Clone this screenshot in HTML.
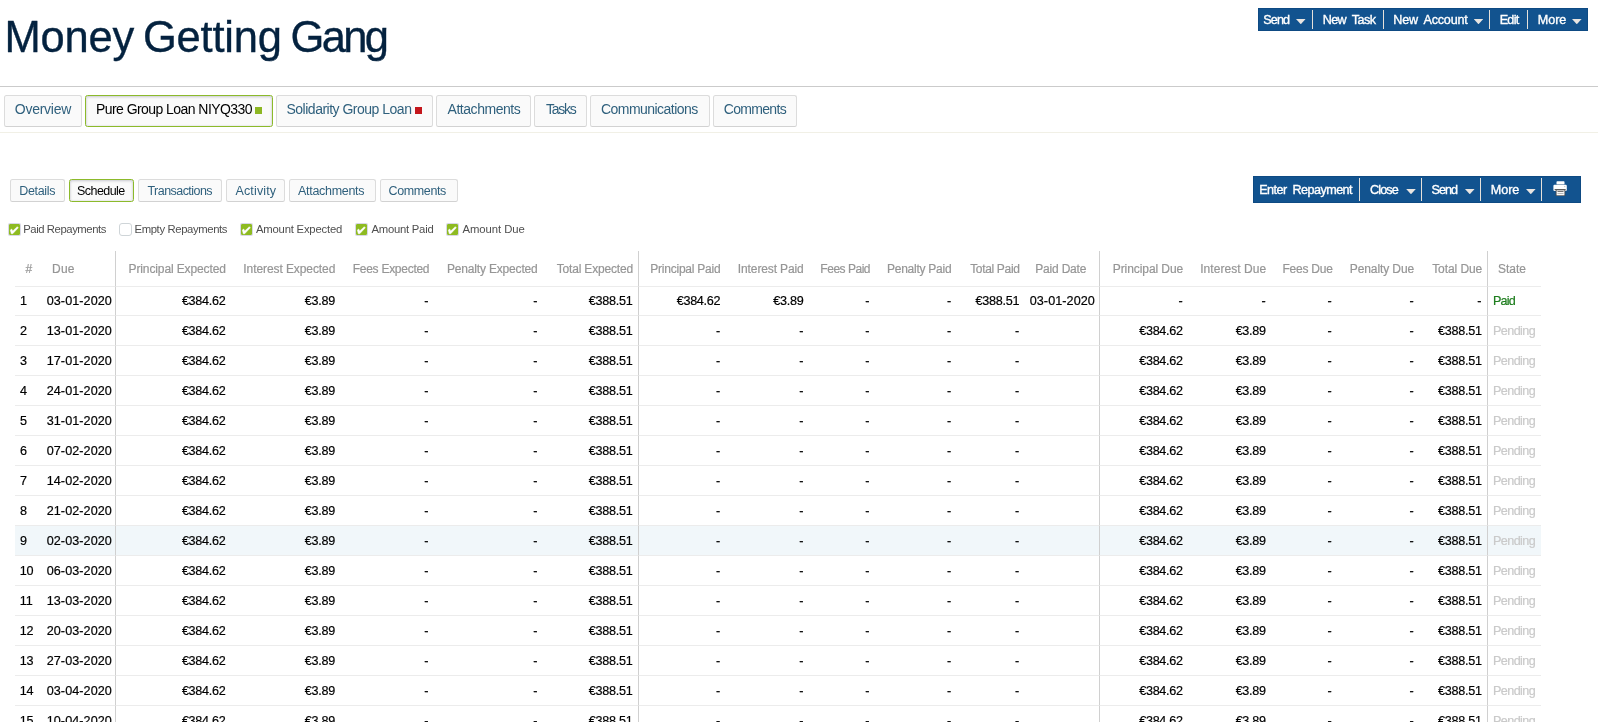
<!DOCTYPE html>
<html lang="en"><head><meta charset="utf-8"><title>Money Getting Gang</title>
<style>
*{box-sizing:border-box}
html,body{margin:0;padding:0;background:#fff}
body{width:1598px;height:722px;overflow:hidden;position:relative;will-change:transform;font-family:"Liberation Sans", sans-serif;color:#000}
a{text-decoration:none;color:inherit}
h1 span{position:absolute;top:0}
h1{position:absolute;margin:0;width:400px;height:60px;font-weight:400;color:#04223f;white-space:nowrap;line-height:60px;-webkit-text-stroke:0.35px #04223f}
hr{position:absolute;left:0;width:1598px;height:1px;border:0;margin:0}
hr.a{top:86px;background:#cbcbcb}
hr.b{top:132px;background:#f1f0e6}
.grp{position:absolute;background:#12538f;border:1px solid #0e4a83;}
.grp a{position:absolute;top:-1px;color:#fff;font-size:12.6px;font-weight:400;white-space:nowrap;word-spacing:3px;display:block;-webkit-text-stroke:0.35px #fff}
.grp i.sep{position:absolute;width:1px;background:#e6e1da}
.grp i.caret{position:absolute;width:9.6px;height:5.3px;background:#e9e5e1;clip-path:polygon(0 0,100% 0,50% 100%)}
.tab{position:absolute;display:block;border:1px solid #dcdcdc;border-bottom-color:#d2d2d2;border-radius:2.5px;background:#fafafa;color:#2f607d;white-space:nowrap;overflow:visible}
.tab.on{border-color:#8cba2b;color:#000;background:#fafafa;box-shadow:inset 0 1px 3px rgba(40,40,70,.2),inset 0 0 2px rgba(40,40,70,.12)}
.tab b{position:absolute;width:7px;height:7px}
.chk{position:absolute;white-space:nowrap;color:#4f4f4f;font-size:11.3px;display:block}
.chk i{position:absolute;left:0;top:0;width:13px;height:13px;border-radius:3px;border:1px solid #cfd5d8;background:#fff}
.chk i.on{background:#8ebb21;border-color:rgba(200,200,218,.7);border-radius:2px;background-clip:padding-box}
.chk i.on svg{position:absolute;left:-1px;top:-1px}
table{position:absolute;left:15px;top:251px;width:1526px;border-collapse:separate;border-spacing:0;table-layout:fixed}
th,td{padding:0;white-space:nowrap;overflow:visible;font-weight:400;border-bottom:1px solid #ececec}
th{color:#969696;-webkit-text-stroke-width:.2px;font-size:12px;height:36px;vertical-align:top;line-height:20px;padding-top:7.74px}
td{-webkit-text-stroke-width:.2px;font-size:12.6px;height:30px;vertical-align:top;color:#000;line-height:20px;padding-top:4.63px}
tr.first td{height:29px;padding-top:3.63px}
th.v,td.v{border-right:1px solid #d0d0d0}
tr.hl td{background:#f1f7fa}
.r{text-align:right}.l{text-align:left}
td.paid{color:#1d7d1d} td.pend{color:#cacaca}
</style></head>
<body>
<h1 style="left:0;top:6.92px;font-size:43.5px"><span style="left:4.40px;letter-spacing:-0.15px">Money</span> <span style="left:143.00px;letter-spacing:-0.22px">Getting</span> <span style="left:290.40px;letter-spacing:-2.6px">Gang</span></h1>
<header>
<div class="grp" id="client-actions" role="toolbar" aria-label="Client actions" style="left:1258px;top:8px;width:330px;height:23px">
<a href="#" style="left:4.35px;line-height:24.86px;letter-spacing:-0.9px">Send<i class="caret" style="left:32.65px;top:11.00px"></i></a>
<a href="#" style="left:63.65px;line-height:24.86px;letter-spacing:-0.57px">New Task</a>
<a href="#" style="left:134.35px;line-height:24.86px;letter-spacing:-0.21px">New Account<i class="caret" style="left:80.35px;top:11.00px"></i></a>
<a href="#" style="left:240.65px;line-height:24.86px;letter-spacing:-0.67px">Edit</a>
<a href="#" style="left:278.75px;line-height:24.86px;letter-spacing:-0.03px">More<i class="caret" style="left:34.25px;top:11.00px"></i></a>
<i class="sep" style="left:53px;top:1px;height:19px"></i>
<i class="sep" style="left:124px;top:1px;height:19px"></i>
<i class="sep" style="left:230px;top:1px;height:19px"></i>
<i class="sep" style="left:268px;top:1px;height:19px"></i>
</div>
</header>
<hr class="a">
<nav id="client-tabs" aria-label="Client sections">
<a href="#" class="tab" style="left:4px;top:95px;width:78px;height:32px;padding-left:9.80px;font-size:14px;line-height:27.29px;letter-spacing:-0.26px">Overview</a>
<a href="#" class="tab on" style="left:85px;top:95px;width:188px;height:32px;padding-left:10.00px;font-size:14px;line-height:27.29px;letter-spacing:-0.56px">Pure Group Loan NIYQ330<b style="background:#8db723;left:169px;top:11px"></b></a>
<a href="#" class="tab" style="left:276px;top:95px;width:157px;height:32px;padding-left:9.50px;font-size:14px;line-height:27.29px;letter-spacing:-0.5px">Solidarity Group Loan<b style="background:#c4161c;left:138px;top:11px"></b></a>
<a href="#" class="tab" style="left:436px;top:95px;width:95px;height:32px;padding-left:10.50px;font-size:14px;line-height:27.29px;letter-spacing:-0.45px">Attachments</a>
<a href="#" class="tab" style="left:534px;top:95px;width:53px;height:32px;padding-left:11.00px;font-size:14px;line-height:27.29px;letter-spacing:-1.25px">Tasks</a>
<a href="#" class="tab" style="left:590px;top:95px;width:120px;height:32px;padding-left:10.00px;font-size:14px;line-height:27.29px;letter-spacing:-0.54px">Communications</a>
<a href="#" class="tab" style="left:713px;top:95px;width:84px;height:32px;padding-left:9.70px;font-size:14px;line-height:27.29px;letter-spacing:-0.67px">Comments</a>
</nav>
<hr class="b">
<section id="loan-account">
<nav id="account-tabs" aria-label="Account sections">
<a href="#" class="tab" style="left:10px;top:179px;width:55px;height:23px;padding-left:8.20px;font-size:12.5px;line-height:22.93px;letter-spacing:-0.32px">Details</a>
<a href="#" class="tab on" style="left:69px;top:179px;width:65px;height:23px;padding-left:7.10px;font-size:12.5px;line-height:22.93px;letter-spacing:-0.57px">Schedule</a>
<a href="#" class="tab" style="left:138px;top:179px;width:84px;height:23px;padding-left:8.50px;font-size:12.5px;line-height:22.93px;letter-spacing:-0.55px">Transactions</a>
<a href="#" class="tab" style="left:226px;top:179px;width:58.5px;height:23px;padding-left:8.50px;font-size:12.5px;line-height:22.93px;letter-spacing:0.14px">Activity</a>
<a href="#" class="tab" style="left:289px;top:179px;width:86.5px;height:23px;padding-left:8.00px;font-size:12.5px;line-height:22.93px;letter-spacing:-0.3px">Attachments</a>
<a href="#" class="tab" style="left:380px;top:179px;width:78px;height:23px;padding-left:7.50px;font-size:12.5px;line-height:22.93px;letter-spacing:-0.37px">Comments</a>
</nav>
<div class="grp" id="account-actions" role="toolbar" aria-label="Account actions" style="left:1253px;top:176px;width:328px;height:27px">
<a href="#" style="left:5.15px;line-height:28.86px;letter-spacing:-0.54px">Enter Repayment</a>
<a href="#" style="left:115.95px;line-height:28.86px;letter-spacing:-0.82px">Close<i class="caret" style="left:36.25px;top:13.00px"></i></a>
<a href="#" style="left:177.55px;line-height:28.86px;letter-spacing:-0.97px">Send<i class="caret" style="left:33.45px;top:13.00px"></i></a>
<a href="#" style="left:236.75px;line-height:28.86px;letter-spacing:-0.03px">More<i class="caret" style="left:35.25px;top:13.00px"></i></a>
<a href="#" title="Print" style="left:299px;top:4px;width:14px;height:15px"><svg width="14" height="15" viewBox="0 0 14 15" style="display:block"><rect x="3.5" y="0.2" width="8" height="3.3" rx="0.7" fill="#fff"/><rect x="3.5" y="3.3" width="8" height="0.5" fill="#5d7691"/><rect x="0.4" y="3.8" width="13.4" height="6.3" rx="1.1" fill="#fefefe"/><rect x="1.6" y="8.2" width="11" height="0.9" fill="#3a3a3a"/><rect x="3.1" y="8.9" width="8.8" height="5.9" fill="#fafafa" stroke="#484848" stroke-width="0.8"/><rect x="4.5" y="10.1" width="6" height="0.9" fill="#666"/><rect x="4.5" y="12.1" width="6" height="0.8" fill="#a8a8a8"/><rect x="11.2" y="5" width="1.1" height="1.1" fill="#c4c4c4"/></svg></a>
<i class="sep" style="left:105px;top:1px;height:23px"></i>
<i class="sep" style="left:167px;top:1px;height:23px"></i>
<i class="sep" style="left:226px;top:1px;height:23px"></i>
<i class="sep" style="left:287px;top:1px;height:23px"></i>
</div>
<form id="schedule-filters">
<label class="chk" style="left:8px;top:223px;padding-left:15.25px;line-height:12.36px;letter-spacing:-0.43px"><i class="on"><svg width="13" height="13" viewBox="0 0 13 13"><path d="M2.3 7.1 L3.7 6 L4.7 8 L9.3 3.7 L10.3 4.8 L4.7 10.8 L3.3 10.8 Z" fill="#fff" stroke="#fff" stroke-width="0.5" stroke-linejoin="round"/></svg></i>Paid Repayments</label>
<label class="chk" style="left:119px;top:223px;padding-left:15.50px;line-height:12.36px;letter-spacing:-0.37px"><i class=""></i>Empty Repayments</label>
<label class="chk" style="left:240px;top:223px;padding-left:16.00px;line-height:12.36px;letter-spacing:-0.21px"><i class="on"><svg width="13" height="13" viewBox="0 0 13 13"><path d="M2.3 7.1 L3.7 6 L4.7 8 L9.3 3.7 L10.3 4.8 L4.7 10.8 L3.3 10.8 Z" fill="#fff" stroke="#fff" stroke-width="0.5" stroke-linejoin="round"/></svg></i>Amount Expected</label>
<label class="chk" style="left:355px;top:223px;padding-left:16.50px;line-height:12.36px;letter-spacing:-0.25px"><i class="on"><svg width="13" height="13" viewBox="0 0 13 13"><path d="M2.3 7.1 L3.7 6 L4.7 8 L9.3 3.7 L10.3 4.8 L4.7 10.8 L3.3 10.8 Z" fill="#fff" stroke="#fff" stroke-width="0.5" stroke-linejoin="round"/></svg></i>Amount Paid</label>
<label class="chk" style="left:446px;top:223px;padding-left:16.50px;line-height:12.36px;letter-spacing:-0.06px"><i class="on"><svg width="13" height="13" viewBox="0 0 13 13"><path d="M2.3 7.1 L3.7 6 L4.7 8 L9.3 3.7 L10.3 4.8 L4.7 10.8 L3.3 10.8 Z" fill="#fff" stroke="#fff" stroke-width="0.5" stroke-linejoin="round"/></svg></i>Amount Due</label>
</form>
<table id="schedule"><colgroup>
<col style="width:27px">
<col style="width:74px">
<col style="width:115px">
<col style="width:109px">
<col style="width:94px">
<col style="width:109px">
<col style="width:96px">
<col style="width:87px">
<col style="width:83px">
<col style="width:66px">
<col style="width:82px">
<col style="width:68px">
<col style="width:75px">
<col style="width:88px">
<col style="width:83px">
<col style="width:66px">
<col style="width:82px">
<col style="width:69px">
<col style="width:53px">
</colgroup><thead><tr>
<th class="l" style="padding-left:10.60px;letter-spacing:0px">#</th>
<th class="l v" style="padding-left:10.10px;letter-spacing:0.2px">Due</th>
<th class="r" style="padding-right:5.23px;letter-spacing:-0.12px">Principal Expected</th>
<th class="r" style="padding-right:4.69px;letter-spacing:-0.08px">Interest Expected</th>
<th class="r" style="padding-right:4.72px;letter-spacing:-0.27px">Fees Expected</th>
<th class="r" style="padding-right:5.36px;letter-spacing:-0.17px">Penalty Expected</th>
<th class="r v" style="padding-right:5.06px;letter-spacing:-0.18px">Total Expected</th>
<th class="r" style="padding-right:5.56px;letter-spacing:-0.23px">Principal Paid</th>
<th class="r" style="padding-right:5.35px;letter-spacing:-0.12px">Interest Paid</th>
<th class="r" style="padding-right:4.95px;letter-spacing:-0.48px">Fees Paid</th>
<th class="r" style="padding-right:5.66px;letter-spacing:-0.25px">Penalty Paid</th>
<th class="r" style="padding-right:5.43px;letter-spacing:-0.33px">Total Paid</th>
<th class="l v" style="padding-left:10.30px;letter-spacing:-0.2px">Paid Date</th>
<th class="r" style="padding-right:4.90px;letter-spacing:-0.08px">Principal Due</th>
<th class="r" style="padding-right:4.77px;letter-spacing:0.06px">Interest Due</th>
<th class="r" style="padding-right:4.41px;letter-spacing:-0.24px">Fees Due</th>
<th class="r" style="padding-right:4.92px;letter-spacing:-0.1px">Penalty Due</th>
<th class="r v" style="padding-right:4.77px;letter-spacing:-0.07px">Total Due</th>
<th class="l" style="padding-left:9.90px;letter-spacing:0.0px">State</th>
</tr></thead><tbody>
<tr class="first">
<td class="l" style="padding-left:5.00px;letter-spacing:0px">1</td>
<td class="l v" style="padding-left:4.70px;letter-spacing:0.08px">03-01-2020</td>
<td class="r" style="padding-right:5.49px;letter-spacing:-0.27px">€384.62</td>
<td class="r" style="padding-right:5.00px;letter-spacing:-0.27px">€3.89</td>
<td class="r" style="padding-right:5.55px;letter-spacing:0px">-</td>
<td class="r" style="padding-right:5.65px;letter-spacing:0px">-</td>
<td class="r v" style="padding-right:5.59px;letter-spacing:-0.27px">€388.51</td>
<td class="r" style="padding-right:5.69px;letter-spacing:-0.27px">€384.62</td>
<td class="r" style="padding-right:5.60px;letter-spacing:-0.27px">€3.89</td>
<td class="r" style="padding-right:5.55px;letter-spacing:0px">-</td>
<td class="r" style="padding-right:5.85px;letter-spacing:0px">-</td>
<td class="r" style="padding-right:5.79px;letter-spacing:-0.27px">€388.51</td>
<td class="l v" style="padding-left:4.70px;letter-spacing:0.08px">03-01-2020</td>
<td class="r" style="padding-right:5.25px;letter-spacing:0px">-</td>
<td class="r" style="padding-right:5.25px;letter-spacing:0px">-</td>
<td class="r" style="padding-right:5.25px;letter-spacing:0px">-</td>
<td class="r" style="padding-right:5.25px;letter-spacing:0px">-</td>
<td class="r v" style="padding-right:5.45px;letter-spacing:0px">-</td>
<td class="l paid" style="padding-left:4.90px;letter-spacing:-0.77px">Paid</td>
</tr>
<tr>
<td class="l" style="padding-left:5.00px;letter-spacing:0px">2</td>
<td class="l v" style="padding-left:4.70px;letter-spacing:0.08px">13-01-2020</td>
<td class="r" style="padding-right:5.49px;letter-spacing:-0.27px">€384.62</td>
<td class="r" style="padding-right:5.00px;letter-spacing:-0.27px">€3.89</td>
<td class="r" style="padding-right:5.55px;letter-spacing:0px">-</td>
<td class="r" style="padding-right:5.65px;letter-spacing:0px">-</td>
<td class="r v" style="padding-right:5.59px;letter-spacing:-0.27px">€388.51</td>
<td class="r" style="padding-right:5.75px;letter-spacing:0px">-</td>
<td class="r" style="padding-right:5.65px;letter-spacing:0px">-</td>
<td class="r" style="padding-right:5.55px;letter-spacing:0px">-</td>
<td class="r" style="padding-right:5.85px;letter-spacing:0px">-</td>
<td class="r" style="padding-right:5.85px;letter-spacing:0px">-</td>
<td class="l v" style="padding-left:4.70px;letter-spacing:0.08px"></td>
<td class="r" style="padding-right:5.19px;letter-spacing:-0.27px">€384.62</td>
<td class="r" style="padding-right:5.20px;letter-spacing:-0.27px">€3.89</td>
<td class="r" style="padding-right:5.25px;letter-spacing:0px">-</td>
<td class="r" style="padding-right:5.25px;letter-spacing:0px">-</td>
<td class="r v" style="padding-right:5.39px;letter-spacing:-0.27px">€388.51</td>
<td class="l pend" style="padding-left:5.00px;letter-spacing:-0.58px">Pending</td>
</tr>
<tr>
<td class="l" style="padding-left:5.00px;letter-spacing:0px">3</td>
<td class="l v" style="padding-left:4.70px;letter-spacing:0.08px">17-01-2020</td>
<td class="r" style="padding-right:5.49px;letter-spacing:-0.27px">€384.62</td>
<td class="r" style="padding-right:5.00px;letter-spacing:-0.27px">€3.89</td>
<td class="r" style="padding-right:5.55px;letter-spacing:0px">-</td>
<td class="r" style="padding-right:5.65px;letter-spacing:0px">-</td>
<td class="r v" style="padding-right:5.59px;letter-spacing:-0.27px">€388.51</td>
<td class="r" style="padding-right:5.75px;letter-spacing:0px">-</td>
<td class="r" style="padding-right:5.65px;letter-spacing:0px">-</td>
<td class="r" style="padding-right:5.55px;letter-spacing:0px">-</td>
<td class="r" style="padding-right:5.85px;letter-spacing:0px">-</td>
<td class="r" style="padding-right:5.85px;letter-spacing:0px">-</td>
<td class="l v" style="padding-left:4.70px;letter-spacing:0.08px"></td>
<td class="r" style="padding-right:5.19px;letter-spacing:-0.27px">€384.62</td>
<td class="r" style="padding-right:5.20px;letter-spacing:-0.27px">€3.89</td>
<td class="r" style="padding-right:5.25px;letter-spacing:0px">-</td>
<td class="r" style="padding-right:5.25px;letter-spacing:0px">-</td>
<td class="r v" style="padding-right:5.39px;letter-spacing:-0.27px">€388.51</td>
<td class="l pend" style="padding-left:5.00px;letter-spacing:-0.58px">Pending</td>
</tr>
<tr>
<td class="l" style="padding-left:5.00px;letter-spacing:0px">4</td>
<td class="l v" style="padding-left:4.70px;letter-spacing:0.08px">24-01-2020</td>
<td class="r" style="padding-right:5.49px;letter-spacing:-0.27px">€384.62</td>
<td class="r" style="padding-right:5.00px;letter-spacing:-0.27px">€3.89</td>
<td class="r" style="padding-right:5.55px;letter-spacing:0px">-</td>
<td class="r" style="padding-right:5.65px;letter-spacing:0px">-</td>
<td class="r v" style="padding-right:5.59px;letter-spacing:-0.27px">€388.51</td>
<td class="r" style="padding-right:5.75px;letter-spacing:0px">-</td>
<td class="r" style="padding-right:5.65px;letter-spacing:0px">-</td>
<td class="r" style="padding-right:5.55px;letter-spacing:0px">-</td>
<td class="r" style="padding-right:5.85px;letter-spacing:0px">-</td>
<td class="r" style="padding-right:5.85px;letter-spacing:0px">-</td>
<td class="l v" style="padding-left:4.70px;letter-spacing:0.08px"></td>
<td class="r" style="padding-right:5.19px;letter-spacing:-0.27px">€384.62</td>
<td class="r" style="padding-right:5.20px;letter-spacing:-0.27px">€3.89</td>
<td class="r" style="padding-right:5.25px;letter-spacing:0px">-</td>
<td class="r" style="padding-right:5.25px;letter-spacing:0px">-</td>
<td class="r v" style="padding-right:5.39px;letter-spacing:-0.27px">€388.51</td>
<td class="l pend" style="padding-left:5.00px;letter-spacing:-0.58px">Pending</td>
</tr>
<tr>
<td class="l" style="padding-left:5.00px;letter-spacing:0px">5</td>
<td class="l v" style="padding-left:4.70px;letter-spacing:0.08px">31-01-2020</td>
<td class="r" style="padding-right:5.49px;letter-spacing:-0.27px">€384.62</td>
<td class="r" style="padding-right:5.00px;letter-spacing:-0.27px">€3.89</td>
<td class="r" style="padding-right:5.55px;letter-spacing:0px">-</td>
<td class="r" style="padding-right:5.65px;letter-spacing:0px">-</td>
<td class="r v" style="padding-right:5.59px;letter-spacing:-0.27px">€388.51</td>
<td class="r" style="padding-right:5.75px;letter-spacing:0px">-</td>
<td class="r" style="padding-right:5.65px;letter-spacing:0px">-</td>
<td class="r" style="padding-right:5.55px;letter-spacing:0px">-</td>
<td class="r" style="padding-right:5.85px;letter-spacing:0px">-</td>
<td class="r" style="padding-right:5.85px;letter-spacing:0px">-</td>
<td class="l v" style="padding-left:4.70px;letter-spacing:0.08px"></td>
<td class="r" style="padding-right:5.19px;letter-spacing:-0.27px">€384.62</td>
<td class="r" style="padding-right:5.20px;letter-spacing:-0.27px">€3.89</td>
<td class="r" style="padding-right:5.25px;letter-spacing:0px">-</td>
<td class="r" style="padding-right:5.25px;letter-spacing:0px">-</td>
<td class="r v" style="padding-right:5.39px;letter-spacing:-0.27px">€388.51</td>
<td class="l pend" style="padding-left:5.00px;letter-spacing:-0.58px">Pending</td>
</tr>
<tr>
<td class="l" style="padding-left:5.00px;letter-spacing:0px">6</td>
<td class="l v" style="padding-left:4.70px;letter-spacing:0.08px">07-02-2020</td>
<td class="r" style="padding-right:5.49px;letter-spacing:-0.27px">€384.62</td>
<td class="r" style="padding-right:5.00px;letter-spacing:-0.27px">€3.89</td>
<td class="r" style="padding-right:5.55px;letter-spacing:0px">-</td>
<td class="r" style="padding-right:5.65px;letter-spacing:0px">-</td>
<td class="r v" style="padding-right:5.59px;letter-spacing:-0.27px">€388.51</td>
<td class="r" style="padding-right:5.75px;letter-spacing:0px">-</td>
<td class="r" style="padding-right:5.65px;letter-spacing:0px">-</td>
<td class="r" style="padding-right:5.55px;letter-spacing:0px">-</td>
<td class="r" style="padding-right:5.85px;letter-spacing:0px">-</td>
<td class="r" style="padding-right:5.85px;letter-spacing:0px">-</td>
<td class="l v" style="padding-left:4.70px;letter-spacing:0.08px"></td>
<td class="r" style="padding-right:5.19px;letter-spacing:-0.27px">€384.62</td>
<td class="r" style="padding-right:5.20px;letter-spacing:-0.27px">€3.89</td>
<td class="r" style="padding-right:5.25px;letter-spacing:0px">-</td>
<td class="r" style="padding-right:5.25px;letter-spacing:0px">-</td>
<td class="r v" style="padding-right:5.39px;letter-spacing:-0.27px">€388.51</td>
<td class="l pend" style="padding-left:5.00px;letter-spacing:-0.58px">Pending</td>
</tr>
<tr>
<td class="l" style="padding-left:5.00px;letter-spacing:0px">7</td>
<td class="l v" style="padding-left:4.70px;letter-spacing:0.08px">14-02-2020</td>
<td class="r" style="padding-right:5.49px;letter-spacing:-0.27px">€384.62</td>
<td class="r" style="padding-right:5.00px;letter-spacing:-0.27px">€3.89</td>
<td class="r" style="padding-right:5.55px;letter-spacing:0px">-</td>
<td class="r" style="padding-right:5.65px;letter-spacing:0px">-</td>
<td class="r v" style="padding-right:5.59px;letter-spacing:-0.27px">€388.51</td>
<td class="r" style="padding-right:5.75px;letter-spacing:0px">-</td>
<td class="r" style="padding-right:5.65px;letter-spacing:0px">-</td>
<td class="r" style="padding-right:5.55px;letter-spacing:0px">-</td>
<td class="r" style="padding-right:5.85px;letter-spacing:0px">-</td>
<td class="r" style="padding-right:5.85px;letter-spacing:0px">-</td>
<td class="l v" style="padding-left:4.70px;letter-spacing:0.08px"></td>
<td class="r" style="padding-right:5.19px;letter-spacing:-0.27px">€384.62</td>
<td class="r" style="padding-right:5.20px;letter-spacing:-0.27px">€3.89</td>
<td class="r" style="padding-right:5.25px;letter-spacing:0px">-</td>
<td class="r" style="padding-right:5.25px;letter-spacing:0px">-</td>
<td class="r v" style="padding-right:5.39px;letter-spacing:-0.27px">€388.51</td>
<td class="l pend" style="padding-left:5.00px;letter-spacing:-0.58px">Pending</td>
</tr>
<tr>
<td class="l" style="padding-left:5.00px;letter-spacing:0px">8</td>
<td class="l v" style="padding-left:4.70px;letter-spacing:0.08px">21-02-2020</td>
<td class="r" style="padding-right:5.49px;letter-spacing:-0.27px">€384.62</td>
<td class="r" style="padding-right:5.00px;letter-spacing:-0.27px">€3.89</td>
<td class="r" style="padding-right:5.55px;letter-spacing:0px">-</td>
<td class="r" style="padding-right:5.65px;letter-spacing:0px">-</td>
<td class="r v" style="padding-right:5.59px;letter-spacing:-0.27px">€388.51</td>
<td class="r" style="padding-right:5.75px;letter-spacing:0px">-</td>
<td class="r" style="padding-right:5.65px;letter-spacing:0px">-</td>
<td class="r" style="padding-right:5.55px;letter-spacing:0px">-</td>
<td class="r" style="padding-right:5.85px;letter-spacing:0px">-</td>
<td class="r" style="padding-right:5.85px;letter-spacing:0px">-</td>
<td class="l v" style="padding-left:4.70px;letter-spacing:0.08px"></td>
<td class="r" style="padding-right:5.19px;letter-spacing:-0.27px">€384.62</td>
<td class="r" style="padding-right:5.20px;letter-spacing:-0.27px">€3.89</td>
<td class="r" style="padding-right:5.25px;letter-spacing:0px">-</td>
<td class="r" style="padding-right:5.25px;letter-spacing:0px">-</td>
<td class="r v" style="padding-right:5.39px;letter-spacing:-0.27px">€388.51</td>
<td class="l pend" style="padding-left:5.00px;letter-spacing:-0.58px">Pending</td>
</tr>
<tr class="hl">
<td class="l" style="padding-left:5.00px;letter-spacing:0px">9</td>
<td class="l v" style="padding-left:4.70px;letter-spacing:0.08px">02-03-2020</td>
<td class="r" style="padding-right:5.49px;letter-spacing:-0.27px">€384.62</td>
<td class="r" style="padding-right:5.00px;letter-spacing:-0.27px">€3.89</td>
<td class="r" style="padding-right:5.55px;letter-spacing:0px">-</td>
<td class="r" style="padding-right:5.65px;letter-spacing:0px">-</td>
<td class="r v" style="padding-right:5.59px;letter-spacing:-0.27px">€388.51</td>
<td class="r" style="padding-right:5.75px;letter-spacing:0px">-</td>
<td class="r" style="padding-right:5.65px;letter-spacing:0px">-</td>
<td class="r" style="padding-right:5.55px;letter-spacing:0px">-</td>
<td class="r" style="padding-right:5.85px;letter-spacing:0px">-</td>
<td class="r" style="padding-right:5.85px;letter-spacing:0px">-</td>
<td class="l v" style="padding-left:4.70px;letter-spacing:0.08px"></td>
<td class="r" style="padding-right:5.19px;letter-spacing:-0.27px">€384.62</td>
<td class="r" style="padding-right:5.20px;letter-spacing:-0.27px">€3.89</td>
<td class="r" style="padding-right:5.25px;letter-spacing:0px">-</td>
<td class="r" style="padding-right:5.25px;letter-spacing:0px">-</td>
<td class="r v" style="padding-right:5.39px;letter-spacing:-0.27px">€388.51</td>
<td class="l pend" style="padding-left:5.00px;letter-spacing:-0.58px">Pending</td>
</tr>
<tr>
<td class="l" style="padding-left:4.70px;letter-spacing:-0.1px">10</td>
<td class="l v" style="padding-left:4.70px;letter-spacing:0.08px">06-03-2020</td>
<td class="r" style="padding-right:5.49px;letter-spacing:-0.27px">€384.62</td>
<td class="r" style="padding-right:5.00px;letter-spacing:-0.27px">€3.89</td>
<td class="r" style="padding-right:5.55px;letter-spacing:0px">-</td>
<td class="r" style="padding-right:5.65px;letter-spacing:0px">-</td>
<td class="r v" style="padding-right:5.59px;letter-spacing:-0.27px">€388.51</td>
<td class="r" style="padding-right:5.75px;letter-spacing:0px">-</td>
<td class="r" style="padding-right:5.65px;letter-spacing:0px">-</td>
<td class="r" style="padding-right:5.55px;letter-spacing:0px">-</td>
<td class="r" style="padding-right:5.85px;letter-spacing:0px">-</td>
<td class="r" style="padding-right:5.85px;letter-spacing:0px">-</td>
<td class="l v" style="padding-left:4.70px;letter-spacing:0.08px"></td>
<td class="r" style="padding-right:5.19px;letter-spacing:-0.27px">€384.62</td>
<td class="r" style="padding-right:5.20px;letter-spacing:-0.27px">€3.89</td>
<td class="r" style="padding-right:5.25px;letter-spacing:0px">-</td>
<td class="r" style="padding-right:5.25px;letter-spacing:0px">-</td>
<td class="r v" style="padding-right:5.39px;letter-spacing:-0.27px">€388.51</td>
<td class="l pend" style="padding-left:5.00px;letter-spacing:-0.58px">Pending</td>
</tr>
<tr>
<td class="l" style="padding-left:4.70px;letter-spacing:-0.1px">11</td>
<td class="l v" style="padding-left:4.70px;letter-spacing:0.08px">13-03-2020</td>
<td class="r" style="padding-right:5.49px;letter-spacing:-0.27px">€384.62</td>
<td class="r" style="padding-right:5.00px;letter-spacing:-0.27px">€3.89</td>
<td class="r" style="padding-right:5.55px;letter-spacing:0px">-</td>
<td class="r" style="padding-right:5.65px;letter-spacing:0px">-</td>
<td class="r v" style="padding-right:5.59px;letter-spacing:-0.27px">€388.51</td>
<td class="r" style="padding-right:5.75px;letter-spacing:0px">-</td>
<td class="r" style="padding-right:5.65px;letter-spacing:0px">-</td>
<td class="r" style="padding-right:5.55px;letter-spacing:0px">-</td>
<td class="r" style="padding-right:5.85px;letter-spacing:0px">-</td>
<td class="r" style="padding-right:5.85px;letter-spacing:0px">-</td>
<td class="l v" style="padding-left:4.70px;letter-spacing:0.08px"></td>
<td class="r" style="padding-right:5.19px;letter-spacing:-0.27px">€384.62</td>
<td class="r" style="padding-right:5.20px;letter-spacing:-0.27px">€3.89</td>
<td class="r" style="padding-right:5.25px;letter-spacing:0px">-</td>
<td class="r" style="padding-right:5.25px;letter-spacing:0px">-</td>
<td class="r v" style="padding-right:5.39px;letter-spacing:-0.27px">€388.51</td>
<td class="l pend" style="padding-left:5.00px;letter-spacing:-0.58px">Pending</td>
</tr>
<tr>
<td class="l" style="padding-left:4.70px;letter-spacing:-0.1px">12</td>
<td class="l v" style="padding-left:4.70px;letter-spacing:0.08px">20-03-2020</td>
<td class="r" style="padding-right:5.49px;letter-spacing:-0.27px">€384.62</td>
<td class="r" style="padding-right:5.00px;letter-spacing:-0.27px">€3.89</td>
<td class="r" style="padding-right:5.55px;letter-spacing:0px">-</td>
<td class="r" style="padding-right:5.65px;letter-spacing:0px">-</td>
<td class="r v" style="padding-right:5.59px;letter-spacing:-0.27px">€388.51</td>
<td class="r" style="padding-right:5.75px;letter-spacing:0px">-</td>
<td class="r" style="padding-right:5.65px;letter-spacing:0px">-</td>
<td class="r" style="padding-right:5.55px;letter-spacing:0px">-</td>
<td class="r" style="padding-right:5.85px;letter-spacing:0px">-</td>
<td class="r" style="padding-right:5.85px;letter-spacing:0px">-</td>
<td class="l v" style="padding-left:4.70px;letter-spacing:0.08px"></td>
<td class="r" style="padding-right:5.19px;letter-spacing:-0.27px">€384.62</td>
<td class="r" style="padding-right:5.20px;letter-spacing:-0.27px">€3.89</td>
<td class="r" style="padding-right:5.25px;letter-spacing:0px">-</td>
<td class="r" style="padding-right:5.25px;letter-spacing:0px">-</td>
<td class="r v" style="padding-right:5.39px;letter-spacing:-0.27px">€388.51</td>
<td class="l pend" style="padding-left:5.00px;letter-spacing:-0.58px">Pending</td>
</tr>
<tr>
<td class="l" style="padding-left:4.70px;letter-spacing:-0.1px">13</td>
<td class="l v" style="padding-left:4.70px;letter-spacing:0.08px">27-03-2020</td>
<td class="r" style="padding-right:5.49px;letter-spacing:-0.27px">€384.62</td>
<td class="r" style="padding-right:5.00px;letter-spacing:-0.27px">€3.89</td>
<td class="r" style="padding-right:5.55px;letter-spacing:0px">-</td>
<td class="r" style="padding-right:5.65px;letter-spacing:0px">-</td>
<td class="r v" style="padding-right:5.59px;letter-spacing:-0.27px">€388.51</td>
<td class="r" style="padding-right:5.75px;letter-spacing:0px">-</td>
<td class="r" style="padding-right:5.65px;letter-spacing:0px">-</td>
<td class="r" style="padding-right:5.55px;letter-spacing:0px">-</td>
<td class="r" style="padding-right:5.85px;letter-spacing:0px">-</td>
<td class="r" style="padding-right:5.85px;letter-spacing:0px">-</td>
<td class="l v" style="padding-left:4.70px;letter-spacing:0.08px"></td>
<td class="r" style="padding-right:5.19px;letter-spacing:-0.27px">€384.62</td>
<td class="r" style="padding-right:5.20px;letter-spacing:-0.27px">€3.89</td>
<td class="r" style="padding-right:5.25px;letter-spacing:0px">-</td>
<td class="r" style="padding-right:5.25px;letter-spacing:0px">-</td>
<td class="r v" style="padding-right:5.39px;letter-spacing:-0.27px">€388.51</td>
<td class="l pend" style="padding-left:5.00px;letter-spacing:-0.58px">Pending</td>
</tr>
<tr>
<td class="l" style="padding-left:4.70px;letter-spacing:-0.1px">14</td>
<td class="l v" style="padding-left:4.70px;letter-spacing:0.08px">03-04-2020</td>
<td class="r" style="padding-right:5.49px;letter-spacing:-0.27px">€384.62</td>
<td class="r" style="padding-right:5.00px;letter-spacing:-0.27px">€3.89</td>
<td class="r" style="padding-right:5.55px;letter-spacing:0px">-</td>
<td class="r" style="padding-right:5.65px;letter-spacing:0px">-</td>
<td class="r v" style="padding-right:5.59px;letter-spacing:-0.27px">€388.51</td>
<td class="r" style="padding-right:5.75px;letter-spacing:0px">-</td>
<td class="r" style="padding-right:5.65px;letter-spacing:0px">-</td>
<td class="r" style="padding-right:5.55px;letter-spacing:0px">-</td>
<td class="r" style="padding-right:5.85px;letter-spacing:0px">-</td>
<td class="r" style="padding-right:5.85px;letter-spacing:0px">-</td>
<td class="l v" style="padding-left:4.70px;letter-spacing:0.08px"></td>
<td class="r" style="padding-right:5.19px;letter-spacing:-0.27px">€384.62</td>
<td class="r" style="padding-right:5.20px;letter-spacing:-0.27px">€3.89</td>
<td class="r" style="padding-right:5.25px;letter-spacing:0px">-</td>
<td class="r" style="padding-right:5.25px;letter-spacing:0px">-</td>
<td class="r v" style="padding-right:5.39px;letter-spacing:-0.27px">€388.51</td>
<td class="l pend" style="padding-left:5.00px;letter-spacing:-0.58px">Pending</td>
</tr>
<tr>
<td class="l" style="padding-left:4.70px;letter-spacing:-0.1px">15</td>
<td class="l v" style="padding-left:4.70px;letter-spacing:0.08px">10-04-2020</td>
<td class="r" style="padding-right:5.49px;letter-spacing:-0.27px">€384.62</td>
<td class="r" style="padding-right:5.00px;letter-spacing:-0.27px">€3.89</td>
<td class="r" style="padding-right:5.55px;letter-spacing:0px">-</td>
<td class="r" style="padding-right:5.65px;letter-spacing:0px">-</td>
<td class="r v" style="padding-right:5.59px;letter-spacing:-0.27px">€388.51</td>
<td class="r" style="padding-right:5.75px;letter-spacing:0px">-</td>
<td class="r" style="padding-right:5.65px;letter-spacing:0px">-</td>
<td class="r" style="padding-right:5.55px;letter-spacing:0px">-</td>
<td class="r" style="padding-right:5.85px;letter-spacing:0px">-</td>
<td class="r" style="padding-right:5.85px;letter-spacing:0px">-</td>
<td class="l v" style="padding-left:4.70px;letter-spacing:0.08px"></td>
<td class="r" style="padding-right:5.19px;letter-spacing:-0.27px">€384.62</td>
<td class="r" style="padding-right:5.20px;letter-spacing:-0.27px">€3.89</td>
<td class="r" style="padding-right:5.25px;letter-spacing:0px">-</td>
<td class="r" style="padding-right:5.25px;letter-spacing:0px">-</td>
<td class="r v" style="padding-right:5.39px;letter-spacing:-0.27px">€388.51</td>
<td class="l pend" style="padding-left:5.00px;letter-spacing:-0.58px">Pending</td>
</tr>
</tbody></table>
</section>
</body></html>
